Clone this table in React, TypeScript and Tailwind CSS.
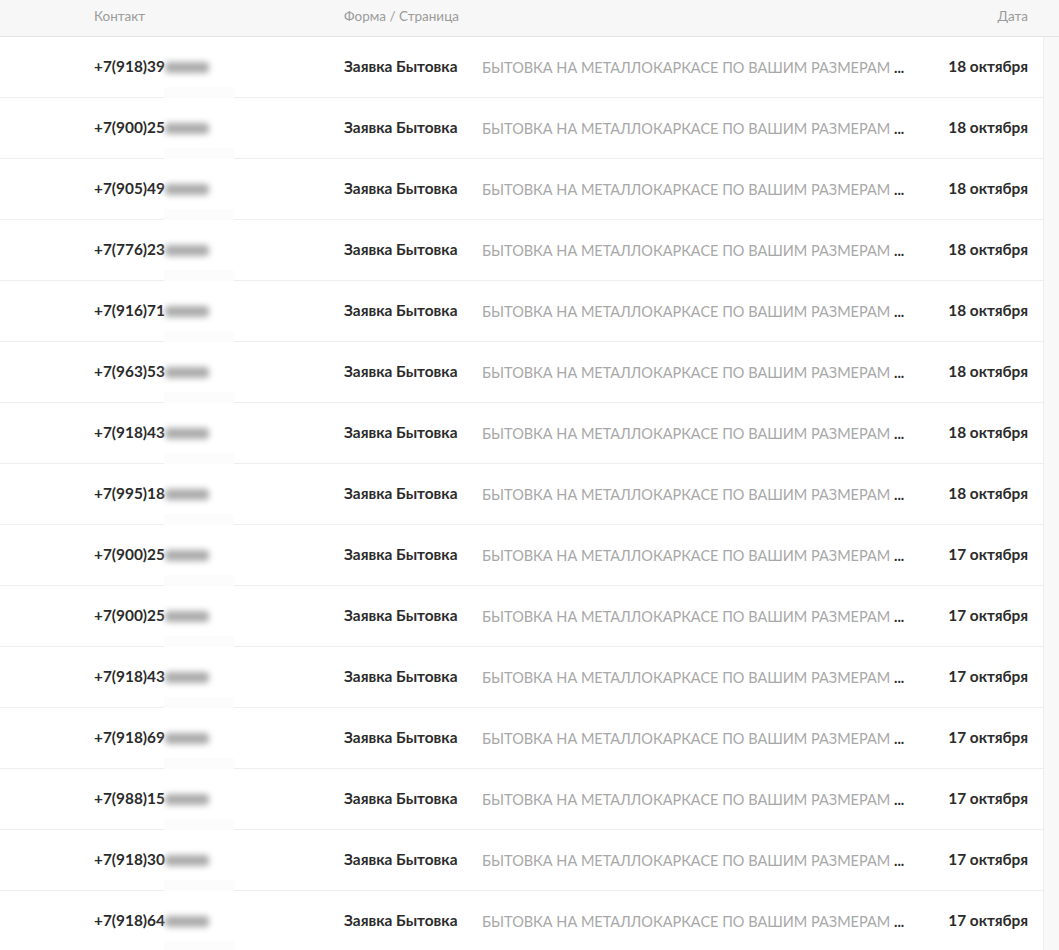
import React from "react";

// строки заявок (номера частично скрыты)
const leads = [
  { phone: "+7(918)39", date: "18 октября" },
  { phone: "+7(900)25", date: "18 октября" },
  { phone: "+7(905)49", date: "18 октября" },
  { phone: "+7(776)23", date: "18 октября" },
  { phone: "+7(916)71", date: "18 октября" },
  { phone: "+7(963)53", date: "18 октября" },
  { phone: "+7(918)43", date: "18 октября" },
  { phone: "+7(995)18", date: "18 октября" },
  { phone: "+7(900)25", date: "17 октября" },
  { phone: "+7(900)25", date: "17 октября" },
  { phone: "+7(918)43", date: "17 октября" },
  { phone: "+7(918)69", date: "17 октября" },
  { phone: "+7(988)15", date: "17 октября" },
  { phone: "+7(918)30", date: "17 октября" },
  { phone: "+7(918)64", date: "17 октября" },
];

function Row({ phone, date }: { phone: string; date: string }) {
  return (
    <div className="relative flex h-[61px] items-center border-b border-[#eeeeee] bg-white pl-[94px] pr-[15px] text-[15.4px]">
      <div className="flex w-[250px] items-center font-bold text-[#2b2b2b]">
        <span>{phone}</span>
        <span className="relative h-[16px] w-[50px]">
          <span className="absolute left-[0px] top-[3px] h-[11px] w-[44px] rounded-sm bg-[#ababab] blur-[3px]" />
        </span>
      </div>
      <div className="w-[138px] font-bold text-[#2b2b2b]">Заявка Бытовка</div>
      <div className="flex-1 whitespace-nowrap pt-[1px] text-[14.5px] text-[#a8a8a8]">
        БЫТОВКА НА МЕТАЛЛОКАРКАСЕ ПО ВАШИМ РАЗМЕРАМ{" "}
        <span className="font-bold text-[#2b2b2b]">...</span>
      </div>
      <div className="font-bold text-[#2b2b2b]">{date}</div>
      {/* светлое пятно от размытия поверх разделителя */}
      <div className="pointer-events-none absolute bottom-[-10px] left-[164px] h-[20px] w-[70px] bg-[#fcfcfc]" />
    </div>
  );
}

export default function App() {
  return (
    <div className="min-h-screen bg-[#f8f8f8]" style={{ fontFamily: "Lato, 'Open Sans', sans-serif" }}>
      <div className="flex h-[37px] items-start border-b border-[#e3e3e3] bg-[#f7f7f7] pl-[94px] pr-[31px] pt-[6px] text-[13.5px] text-[#9b9b9b]">
        <div className="w-[250px]">Контакт</div>
        <div className="flex-1">Форма / Страница</div>
        <div>Дата</div>
      </div>
      <div className="w-[1043px] overflow-hidden bg-white shadow-[1px_0_0_#efefef]">
        {leads.map((l, i) => (
          <Row key={i} phone={l.phone} date={l.date} />
        ))}
      </div>
    </div>
  );
}
